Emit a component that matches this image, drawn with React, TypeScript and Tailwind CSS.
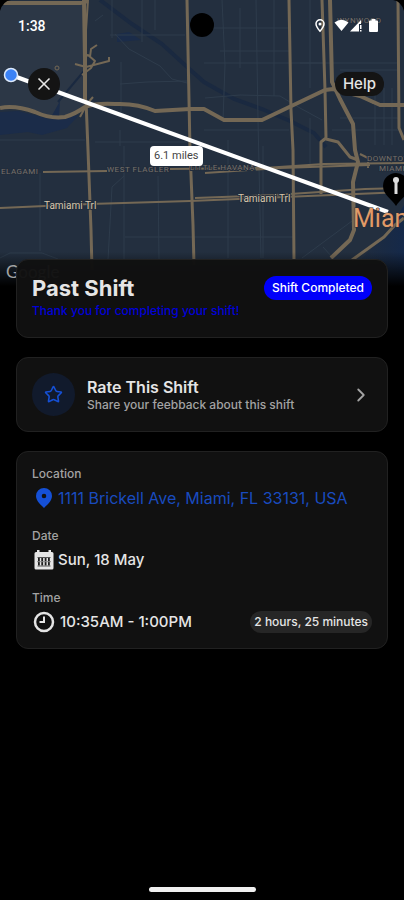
import type { ReactNode } from 'react';
import { ChevronRight, Star, X } from 'lucide-react';

function CityMap() {
  return (
    <svg
      className="absolute inset-0 h-full w-full"
      viewBox="0 0 404 290"
      preserveAspectRatio="xMidYMin slice"
      role="img"
      aria-label="Map of Miami with the route to the shift"
      fontFamily='Roboto, "Noto Sans", sans-serif'
    >
      <defs>
        <linearGradient id="fade" x1="0" y1="0" x2="0" y2="1">
          <stop offset="0" stopColor="#000" stopOpacity="0" />
          <stop offset="0.9" stopColor="#000" />
          <stop offset="1" stopColor="#000" />
        </linearGradient>
        <linearGradient id="bay" x1="0" y1="0" x2="1" y2="0">
          <stop offset="0" stopColor="#17263c" stopOpacity="0" />
          <stop offset="1" stopColor="#15294a" />
        </linearGradient>
      </defs>
      <rect width="404" height="290" fill="#232f3f" />
      <path d="M0 4h84l1 102-20 11-15 0-35-10-15 1z" fill="#2c3746" />
      <path d="M0 112l18-1 32 8 10-18-1 17 20-3-12 13-25 7-14-3-28 3z" fill="#1b2c49" />
      <path d="M117 34l12-2 12 8-24 2z" fill="#1b2c49" />
      <path d="M404 205l-17 28-25 25-22 32h64z" fill="url(#bay)" />
      <g fill="none" stroke="#1a2940" strokeWidth="4">
        <path d="M100 0l32 24 30 20 24 22 18 16 30 17 28 10 28 12 24 12 12 14" />
        <path d="M58 102l26-31" strokeWidth="2" />
      </g>
      <g fill="none" stroke="#2e3c4c" strokeWidth="1">
        <path d="M121 62v55M120 84l27-2 40-1M115 34l14 15 31 17 12 13 15 4M142 0v42M112 0v38M95 21l8-6M110 35h75M155 0v30M120 130v16M95 142h92M0 140h85" />
        <path d="M40 173v78M0 258l10-5h32l16 6M108 260l4-73 12-11v-30M124 176v84M158 176l1 84M125 237h68M193 237h100" />
        <path d="M222 0l3 65-2 55M256 0l2 120 3 138M274 0v96M310 0v88M240 8v60M204 28h85M220 51h70M204 63h120M300 63h98M205 98l35-3 40 1 20 12 22 12M204 130h85M228 140v118" />
        <path d="M302 258l50-37M323 247l10 11M263 146v112M340 70h58M340 118h60M375 95v50M384 88v57M392 88v57M332 130h68M310 118v48" />
      </g>
      <g fill="none" stroke="#746855" strokeWidth="3" strokeLinejoin="round">
        <path d="M0 3h80l8-2M84 0l1 60v40" strokeWidth="4" />
        <path d="M88 0l-2 30v70" strokeWidth="2" />
        <path d="M86 100l2 50 3 80 1 40M187 0l2 100 1 50 3 75 1 40M289 0l2 110 2 40 1 110" />
        <path d="M322 0l3 90 1 48-5 4v52M326 139l12 3 12 15 8 3" />
        <path d="M330 0l2 82 8 17 13 25 2 26 3 12-5 20 1 48-4 10-19 18" strokeWidth="4" />
        <path d="M398 0l1 128 5 12M404 218l-9 7-11 12-32 23" />
        <path d="M0 108q15-3 35 4 15 7 30 5 10-3 20-10 10-4 30-3 22-1 40 7l35-2h14l20 11h38l63-30 8-1 27 7 20 9h24" strokeWidth="4" />
        <path d="M356 94l18 9M80 117l7-13 6-7" strokeWidth="2" />
        <path d="M43 172l64-1M170 169l94-1 60-4 80-1M205 173l75-5 90-3M0 208l90-4 100-3 214-9M195 198l80-3 90-6 39-1M360 154l8 4v10" strokeWidth="2" />
        <path d="M75 64l11 3 23-6v-4M86 67l-2-10 4-2 7 6-4 7-9 7M90 57l1-8 6-4" strokeWidth="2" />
        <circle cx="57" cy="68" r="2" strokeWidth="1" />
      </g>
      <g fill="#78716a" stroke="#222d3c" strokeWidth="2" paintOrder="stroke" fontSize="8" letterSpacing="0.5">
        <text x="1" y="174">ELAGAMI</text>
        <text x="107" y="172">WEST FLAGLER</text>
        <text x="190" y="170">LITTLE HAVANA</text>
        <text x="367" y="161">DOWNTOWN</text>
        <text x="379" y="171">MIAMI</text>
        <text x="337" y="23">WYNWOOD</text>
      </g>
      <g fill="#d8c6aa" stroke="#222d3c" strokeWidth="2" paintOrder="stroke" fontSize="10">
        <text x="44" y="209">Tamiami Trl</text>
        <text x="238" y="202">Tamiami Trl</text>
      </g>
      <path d="M11 75L388 212" stroke="#fff" strokeWidth="4" />
      <circle cx="11" cy="75" r="6.5" fill="#3b82f6" stroke="#dce9fb" strokeWidth="1.5" />
      <path d="M396 206c-4-7-13-11-13-20a13 13 0 0 1 26 0c0 9-9 13-13 20z" fill="#000" />
      <path d="M396 182v12" stroke="#ddd" strokeWidth="3" />
      <circle cx="396" cy="180" r="3" fill="#ddd" />
      <text x="353" y="227" fontSize="25" fill="#e09a68" stroke="#2b2c33" strokeWidth="1" paintOrder="stroke">Miami</text>
      <rect y="252" width="404" height="38" fill="url(#fade)" />
      <text x="6" y="278" fontSize="17" fill="#a3a3a3" fontFamily="Lato, sans-serif">Google</text>
      <path d="M0 0h11Q3 1 0 11zM404 0h-11q8 1 11 11z" fill="#000" />
    </svg>
  );
}

function StatusIcons() {
  return (
    <svg width="66" height="16" viewBox="0 0 66 16" fill="#fff" role="img" aria-label="Location, Wi-Fi, signal, battery">
      <path d="M6 1.8a4 4 0 0 1 4 4c0 3-4 7.400-4 7.400S2 8.800 2 5.800a4 4 0 0 1 4-4z" fill="none" stroke="#fff" strokeWidth="1.500" />
      <circle cx="6" cy="6" r="1.500" />
      <path d="M20.500 4.500Q27.500-1 34.500 4.500L27.500 13z" />
      <path d="M36 13.500L47 2v4h-2v7.500z" />
      <path d="M46 7h1.500v4H46zM46 12h1.500v1.500H46z" />
      <path d="M57.500 1h4v1.500h1.500q1 0 1 1V13q0 1-1 1h-7q-1 0-1-1V3.500q0-1 1-1h1.500z" />
    </svg>
  );
}

function PinIcon() {
  return (
    <svg width="24" height="24" viewBox="0 0 24 24" fill="#1550d6" aria-hidden="true">
      <path fillRule="evenodd" d="M12 2a8 8 0 0 1 8 8c0 5-5 9-8 12-3-3-8-7-8-12a8 8 0 0 1 8-8zm0 5.700a2.300 2.300 0 1 0 0 4.600 2.300 2.300 0 0 0 0-4.600z" />
    </svg>
  );
}

function CalendarIcon() {
  return (
    <svg width="24" height="24" viewBox="0 0 24 24" aria-hidden="true">
      <path d="M5 2h2.500v2h9V2H19v2h1q1.500 0 1.500 1.500V20q0 1.500-1.500 1.500H4Q2.500 21.500 2.500 20V5.500Q2.500 4 4 4h1z" fill="#e5e5e5" />
      <path d="M6 10h1.800v7.500H6zM9.300 10h1.800v7.500H9.300zM12.700 10h1.800v7.500h-1.800zM16 10h1.800v7.500H16z" fill="#1c1c1c" />
      <path d="M5.500 9.500h13M5.500 18h13" stroke="#555" strokeWidth="1" />
      <path d="M5 13.700h14" stroke="#8a8a8a" strokeWidth="1" />
    </svg>
  );
}

function ClockIcon() {
  return (
    <svg width="24" height="24" viewBox="0 0 24 24" fill="none" stroke="#e5e5e5" strokeWidth="2.500" aria-hidden="true">
      <circle cx="12" cy="12" r="9" />
      <path d="M12 6.500V12H7.500" strokeWidth="2" />
    </svg>
  );
}

function Detail({ label, children }: { label: string; children: ReactNode }) {
  return (
    <div>
      <dt className="text-xs leading-4 font-medium text-[#a3a3a3]">{label}</dt>
      <dd className="mt-1 flex h-6 items-center">{children}</dd>
    </div>
  );
}

export default function App() {
  return (
    <div className="flex min-h-screen flex-col overflow-x-hidden bg-black font-[Inter,'Noto_Sans',sans-serif] text-[#e5e5e5]">
      <header className="relative h-[290px] overflow-hidden">
        <CityMap />
        <div className="relative flex h-[52px] items-center justify-between pr-6 pl-[18px] font-[Roboto,sans-serif] text-sm font-medium text-white">
          <span>1:38</span>
          <StatusIcons />
          <span className="absolute top-[13px] left-1/2 size-6 -translate-x-1/2 rounded-full bg-black" />
        </div>
        <div className="relative mt-4 flex items-center justify-between pr-5 pl-7">
          <button type="button" aria-label="Close" className="grid size-8 place-items-center rounded-full bg-[#141414]">
            <X size={20} strokeWidth={2} />
          </button>
          <button type="button" className="h-6 rounded-full bg-[#141414] px-2 text-[15px] leading-6 font-medium">
            Help
          </button>
        </div>
        <span className="absolute top-[146px] left-[150px] h-5 rounded bg-white px-1 font-[Roboto,sans-serif] text-[11px] leading-5 text-[#444]">
          6.1 miles
        </span>
      </header>

      <main className="relative -mt-[31px] flex flex-1 flex-col gap-[19px] px-4">
        <section className="h-[79px] rounded-xl border border-[#212121] bg-[#111111]/97 px-[15px] pt-[14px]">
          <div className="flex items-center justify-between">
            <h1 className="text-[22px] leading-7 font-bold">Past Shift</h1>
            <span className="rounded-full bg-[#0000fa] px-2 text-xs leading-6 font-medium text-white">Shift Completed</span>
          </div>
          <p className="text-xs leading-[18px] font-medium text-[#0000d8]">Thank you for completing your shift!</p>
        </section>

        <button type="button" className="flex h-[75px] items-center rounded-xl border border-[#212121] bg-[#111111] px-[15px] text-left">
          <span className="grid size-[43px] place-items-center rounded-full bg-[#111a2c]">
            <Star size={19} strokeWidth={2} color="#1550d6" />
          </span>
          <span className="ml-3 flex-1">
            <span className="block text-base leading-5 font-semibold">Rate This Shift</span>
            <span className="block text-xs leading-4 font-medium text-[#a3a3a3]">Share your feebback about this shift</span>
          </span>
          <ChevronRight size={22} strokeWidth={2} color="#a3a3a3" />
        </button>

        <dl className="flex flex-col gap-[18px] rounded-xl border border-[#212121] bg-[#111111] px-[15px] pt-[14px] pb-[14px]">
          <Detail label="Location">
            <a href="#location" className="flex items-center gap-0.5 text-base leading-6 whitespace-nowrap text-[#194bbf]">
              <PinIcon />
              1111 Brickell Ave, Miami, FL 33131, USA
            </a>
          </Detail>
          <Detail label="Date">
            <span className="flex items-center gap-0.5 text-[15px] leading-6 font-medium">
              <CalendarIcon />
              Sun, 18 May
            </span>
          </Detail>
          <Detail label="Time">
            <span className="flex flex-1 items-center gap-1 text-[15px] leading-6 font-medium">
              <ClockIcon />
              10:35AM - 1:00PM
            </span>
            <span className="rounded-full bg-[#262626] px-1 text-xs leading-[22px] font-medium">2 hours, 25 minutes</span>
          </Detail>
        </dl>
      </main>

      <footer className="flex justify-center pb-2">
        <span className="h-[5px] w-[107px] rounded-full bg-[#f0f0f0]" />
      </footer>
    </div>
  );
}
